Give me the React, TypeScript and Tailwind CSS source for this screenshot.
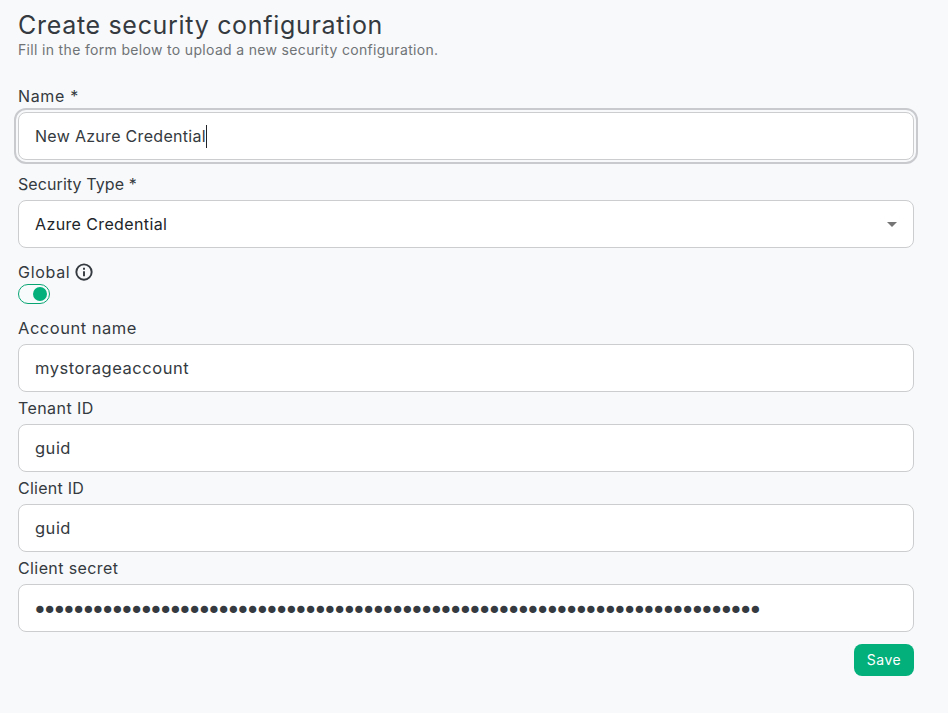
import { clsx } from 'clsx';
import type { ReactNode } from 'react';
import { MdArrowDropDown } from 'react-icons/md';

const SECRET_LENGTH = 75;

interface FieldProps {
  label: string;
  labelClass?: string;
  className?: string;
  focused?: boolean;
  children: ReactNode;
}

function Field({ label, labelClass, className, focused, children }: FieldProps) {
  return (
    <div className={className}>
      <div className="flex h-6 items-center">
        <span className={clsx('whitespace-nowrap', labelClass)}>{label}</span>
      </div>
      <div
        className={clsx(
          'mt-1 flex h-12 items-center rounded-lg border border-[#cccdcf] bg-white px-4',
          focused && 'outline-2 outline-offset-2 outline-[#c8cacd]',
        )}
      >
        {children}
      </div>
    </div>
  );
}

function InfoIcon() {
  return (
    <svg viewBox="0 0 24 24" className="size-5" fill="none" stroke="currentColor" strokeWidth={2.3}>
      <circle cx="12" cy="12" r="9.2" />
      <path d="M12 11v6M12 7v2.2" />
    </svg>
  );
}

function Toggle() {
  return (
    <div
      role="switch"
      aria-checked="true"
      className="flex h-5 w-8 items-center justify-end rounded-full border border-[#08a573] bg-[#f8fbfc] pr-0.5"
    >
      <div className="size-3.5 rounded-full bg-[#03b07b]" />
    </div>
  );
}

export default function App() {
  return (
    <div className="min-h-screen bg-[#f8f9fb] pt-[9px] pr-[34px] pl-[18px] font-['Inter','Liberation_Sans',sans-serif] text-base text-[#343a40]">
      <h1 className="h-[31px] text-[25px] leading-8 tracking-[0.69px] whitespace-nowrap">
        <span>Create security configuration</span>
      </h1>
      <p className="h-5 text-sm leading-5 tracking-[0.33px] whitespace-nowrap text-[#6f7376]">
        <span>Fill in the form below to upload a new security configuration.</span>
      </p>

      <form className="mt-6">
        <Field label="Name *" labelClass="tracking-[0.65px]" focused>
          <span className="tracking-[0.3px]">New Azure Credential</span>
          <span className="h-[23px] w-px bg-[#212529]" />
        </Field>

        <Field label="Security Type *" labelClass="tracking-[0.1px]" className="mt-3">
          <span className="tracking-[0.38px] text-[#212529]">Azure Credential</span>
          <MdArrowDropDown className="-mr-[7px] ml-auto size-6 text-[#757575]" />
        </Field>

        <div className="mt-3">
          <div className="flex h-6 items-center gap-1">
            <span className="tracking-[0.7px]">Global</span>
            <InfoIcon />
          </div>
          <Toggle />
        </div>

        <Field label="Account name" labelClass="text-[16.5px] tracking-[0.5px]" className="mt-3">
          <span className="text-[16.5px] tracking-[0.54px]">mystorageaccount</span>
        </Field>
        <Field label="Tenant ID" labelClass="tracking-[0.42px]" className="mt-1">
          <span className="text-[16.5px] tracking-[0.5px]">guid</span>
        </Field>
        <Field label="Client ID" labelClass="tracking-[0.25px]" className="mt-1">
          <span className="text-[16.5px] tracking-[0.5px]">guid</span>
        </Field>
        <Field label="Client secret" labelClass="tracking-[0.4px]" className="mt-1">
          <span className="-ml-[2.4px] pt-[5px] font-['DejaVu_Sans',sans-serif] text-[25px] leading-8 tracking-[-5.08px]">
            {'•'.repeat(SECRET_LENGTH)}
          </span>
        </Field>

        <div className="mt-3 flex justify-end">
          <button
            type="button"
            className="h-8 w-[60px] rounded-lg bg-[#03b07b] text-sm tracking-[0.5px] text-white"
          >
            Save
          </button>
        </div>
      </form>
    </div>
  );
}
